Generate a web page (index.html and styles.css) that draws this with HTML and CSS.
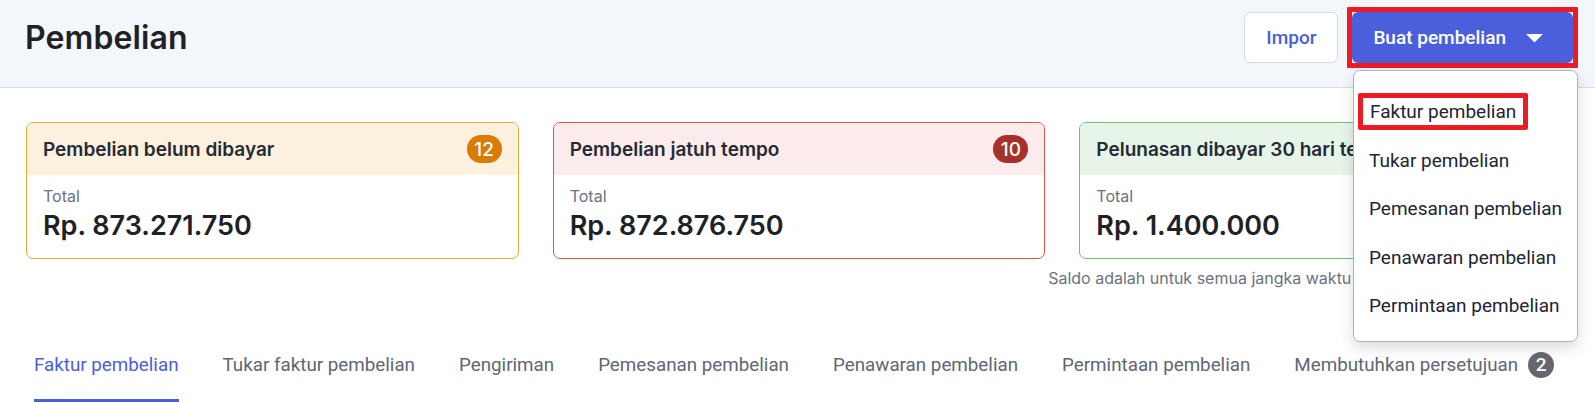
FILE: index.html
```html
<!DOCTYPE html>
<html lang="id">
<head>
<meta charset="utf-8">
<title>Pembelian</title>
<link rel="stylesheet" href="styles.css">
</head>
<body>
<header class="page-header">
  <h1 class="page-title">Pembelian</h1>
  <div class="header-actions">
    <button class="btn btn-outline">Impor</button>
    <div class="create-wrap">
      <span class="annot annot-btn">
        <button class="btn btn-primary">Buat pembelian
          <svg class="caret" width="17" height="9" viewBox="0 0 17 9"><polygon points="0,0 17,0 8.5,8.5" fill="#ffffff"/></svg>
        </button>
      </span>
      <div class="dropdown">
        <div class="dropdown-item"><span class="annot annot-item">Faktur pembelian</span></div>
        <div class="dropdown-item">Tukar pembelian</div>
        <div class="dropdown-item">Pemesanan pembelian</div>
        <div class="dropdown-item">Penawaran pembelian</div>
        <div class="dropdown-item">Permintaan pembelian</div>
      </div>
    </div>
  </div>
</header>
<main class="content">
  <section class="cards">
    <div class="card card-warning">
      <div class="card-head">
        <span class="card-title">Pembelian belum dibayar</span>
        <span class="count count-warning">12</span>
      </div>
      <div class="card-body">
        <div class="card-label">Total</div>
        <div class="card-amount">Rp. 873.271.750</div>
      </div>
    </div>
    <div class="card card-danger">
      <div class="card-head">
        <span class="card-title">Pembelian jatuh tempo</span>
        <span class="count count-danger">10</span>
      </div>
      <div class="card-body">
        <div class="card-label">Total</div>
        <div class="card-amount">Rp. 872.876.750</div>
      </div>
    </div>
    <div class="card card-success">
      <div class="card-head">
        <span class="card-title">Pelunasan dibayar 30 hari terakhir</span>
      </div>
      <div class="card-body">
        <div class="card-label">Total</div>
        <div class="card-amount">Rp. 1.400.000</div>
      </div>
    </div>
  </section>
  <p class="caption">Saldo adalah untuk semua jangka waktu dalam mata uang dasar Anda</p>
  <nav class="tabs">
    <a class="tab active">Faktur pembelian</a>
    <a class="tab">Tukar faktur pembelian</a>
    <a class="tab">Pengiriman</a>
    <a class="tab">Pemesanan pembelian</a>
    <a class="tab">Penawaran pembelian</a>
    <a class="tab">Permintaan pembelian</a>
    <a class="tab">Membutuhkan persetujuan <span class="tab-badge">2</span></a>
  </nav>
</main>
</body>
</html>
```

FILE: styles.css
```css
* { box-sizing: border-box; }

body {
  margin: 0;
  background: #ffffff;
  font-family: Inter, "Noto Sans", sans-serif;
  color: #1f2329;
  overflow: hidden;
}

.page-header {
  display: flex;
  align-items: center;
  justify-content: space-between;
  height: 88px;
  padding: 12px 22px 24px 25px;
  background: #f3f6fb;
  border-bottom: 1px solid #d8dce3;
}

.page-title {
  margin: 0;
  font-size: 32px;
  font-weight: 600;
  line-height: 40px;
  color: #1e2125;
  letter-spacing: 0.1px;
}

.header-actions {
  display: flex;
  align-items: center;
  gap: 14px;
}

.btn {
  font-family: Roboto, "Liberation Sans", sans-serif;
  font-size: 19px;
  font-weight: 500;
  height: 51px;
  border-radius: 6px;
  cursor: pointer;
  display: flex;
  align-items: center;
}

.btn-outline {
  background: #ffffff;
  color: #4b5edb;
  border: 1px solid #d6dbe3;
  padding: 0 21px;
}

.btn-primary {
  background: #4b5edb;
  color: #ffffff;
  border: none;
  padding: 0 30px 0 21px;
  gap: 20px;
}

.caret { display: block; margin-top: 1px; }

.create-wrap {
  position: relative;
}

.annot {
  border: 5px solid #ec1c26;
}

.annot-btn {
  display: flex;
  margin: -5px;
  border-radius: 1px;
}

.dropdown {
  position: absolute;
  top: calc(100% + 7px);
  right: -5px;
  width: 225px;
  background: #ffffff;
  border: 1px solid #aeb3bd;
  border-radius: 7px;
  box-shadow: 0 6px 14px rgba(30, 35, 50, 0.16);
  padding: 17px 0 10px;
  z-index: 10;
}

.dropdown-item {
  font-family: Roboto, "Liberation Sans", sans-serif;
  font-size: 19px;
  line-height: 48.5px;
  height: 48.5px;
  padding-left: 15px;
  color: #1d2434;
  white-space: nowrap;
}

.annot-item {
  display: inline-block;
  line-height: 27px;
  padding: 0 7px;
  margin-left: -11px;
  border-radius: 2px;
}

.content {
  padding: 0 23px 0 26px;
}

.cards {
  display: grid;
  grid-template-columns: repeat(3, 1fr);
  gap: 34px;
  margin-top: 34px;
}

.card {
  border: 1px solid;
  border-radius: 7px;
  overflow: hidden;
  background: #ffffff;
}

.card-warning { border-color: #e2ac33; }
.card-warning .card-head { background: #fbf1de; }
.card-danger { border-color: #d9534f; }
.card-danger .card-head { background: #fcebec; }
.card-success { border-color: #71c174; }
.card-success .card-head { background: #e7f4e8; }

.card-head {
  display: flex;
  align-items: center;
  justify-content: space-between;
  height: 52px;
  padding: 0 16px;
}

.card-title {
  font-size: 19px;
  font-weight: 600;
  color: #252a34;
  white-space: nowrap;
}

.count {
  display: inline-flex;
  align-items: center;
  justify-content: center;
  height: 28px;
  min-width: 35px;
  padding: 0 6px;
  border-radius: 14px;
  color: #ffffff;
  font-size: 19px;
  font-weight: 500;
}

.count-warning { background: #d97b06; }
.count-danger { background: #a8302a; }

.card-body {
  padding: 11px 16px 16px;
}

.card-label {
  font-size: 16px;
  line-height: 20px;
  color: #6b7280;
}

.card-amount {
  margin-top: 4px;
  font-size: 27px;
  line-height: 32px;
  font-weight: 600;
  color: #1e2125;
}

.caption {
  margin: 9px -4px 0 0;
  text-align: right;
  font-size: 16px;
  line-height: 20px;
  color: #6b7280;
}

.tabs {
  display: flex;
  gap: 44px;
  margin-top: 64px;
  padding-left: 8px;
}

.tab {
  display: flex;
  align-items: center;
  font-family: Roboto, "Liberation Sans", sans-serif;
  font-size: 18.8px;
  line-height: 26px;
  color: #5f6673;
  padding-bottom: 21px;
  border-bottom: 3px solid transparent;
  white-space: nowrap;
}

.tab.active {
  color: #4b5edb;
  border-bottom-color: #4b5edb;
}

.tab-badge {
  display: inline-flex;
  align-items: center;
  justify-content: center;
  width: 26px;
  height: 26px;
  margin-left: 10px;
  border-radius: 50%;
  background: #66676e;
  color: #ffffff;
  font-weight: 500;
  font-size: 19px;
}
```
